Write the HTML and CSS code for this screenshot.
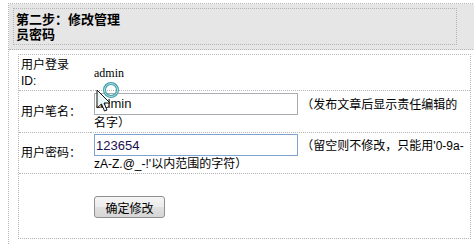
FILE: index.html
```html
<!DOCTYPE html>
<html>
<head>
<meta charset="utf-8">
<link rel="stylesheet" href="styles.css">
</head>
<body>
<div class="wrap">
  <div class="head">
    <div class="head-box">
      <div class="title">第二步：修改管理员密码</div>
    </div>
  </div>
  <table class="form">
    <tr class="r1">
      <td class="lbl">用户登录ID:</td>
      <td class="val"><span class="serif">admin</span></td>
    </tr>
    <tr class="r2">
      <td class="lbl">用户笔名：</td>
      <td class="val"><input class="inp" type="text" value="admin"> （发布文章后显示责任编辑的名字）</td>
    </tr>
    <tr class="r3">
      <td class="lbl">用户密码：</td>
      <td class="val"><input class="inp focus" type="text" value="123654"> （留空则不修改，只能用'0-9a-zA-Z.@_-!'以内范围的字符）</td>
    </tr>
    <tr class="r4">
      <td class="lbl last"></td>
      <td class="val last"><button class="btn" type="button">确定修改</button></td>
    </tr>
  </table>
</div>
<svg class="cursor" width="30" height="34" viewBox="0 0 30 34">
  <circle cx="16" cy="8" r="6.5" fill="none" stroke="#3f9ea8" stroke-width="3"/>
  <circle cx="16" cy="8" r="6.5" fill="none" stroke="#b6e2e6" stroke-width="1"/>
  <polygon points="2,8 2,26 6.5,22 9.5,29 12,28 9,21 15,21" fill="#eaf7f7" stroke="#111" stroke-width="1" stroke-linejoin="miter"/>
</svg>
</body>
</html>
```
FILE: styles.css
```css
html, body {
  overflow: hidden;
}
body {
  margin: 0;
  padding: 3px 0 0 8px;
  font-family: "Liberation Sans", "Noto Sans CJK SC", sans-serif;
  font-size: 12px;
  color: #000;
  background: #fff;
  position: relative;
}
.wrap {
  border-top: 1px dotted #b4b4b4;
  border-left: 1px dotted #b4b4b4;
  width: 466px;
  height: 240px;
}
.head {
  background: #e6e6e6;
  border-bottom: 1px dotted #b4b4b4;
  padding: 4px 0;
}
.head-box {
  box-sizing: border-box;
  margin-left: 4px;
  width: 444px;
  height: 37px;
  border: 1px dotted #b4b4b4;
  padding: 3px 2px 2px 2px;
}
.title {
  width: 110px;
  font-weight: bold;
  font-size: 13px;
  line-height: 15px;
}
.form {
  margin: 4px 0 0 9px;
  width: 453px;
  border: 1px dotted #b4b4b4;
  border-spacing: 0;
  table-layout: fixed;
}
.form td {
  border-bottom: 1px dotted #b4b4b4;
  vertical-align: middle;
  line-height: 16px;
  padding-top: 0;
  padding-bottom: 0;
}
.form td.last {
  border-bottom: none;
}
.lbl {
  width: 62px;
  padding-left: 2px;
  padding-right: 8px;
}
.val {
  padding-left: 3px;
  padding-right: 2px;
}
.r1 { height: 36px; }
.r2 { height: 42px; }
.r3 { height: 41px; }
.r4 { height: 64px; }
.r4 .val { padding-top: 2px; }
.serif {
  font-family: "Liberation Serif", serif;
  font-size: 12px;
}
.inp {
  box-sizing: border-box;
  width: 204px;
  height: 22px;
  margin: 0;
  padding: 0 1px;
  border: 1px solid #a9abb0;
  font-family: "Liberation Sans", sans-serif;
  font-size: 13px;
  color: #111;
  background: #fff;
  outline: none;
  vertical-align: baseline;
}
.inp.focus {
  border-color: #7ea3d0;
  color: #1a1050;
}
.btn {
  box-sizing: border-box;
  width: 71px;
  height: 22px;
  margin: 0;
  padding: 0;
  border: 1px solid #8f8f8f;
  border-radius: 3px;
  background: linear-gradient(#f5f5f5, #ececec 48%, #e0e0e0 52%, #d6d6d6);
  font-family: "Noto Sans CJK SC", sans-serif;
  font-size: 12px;
  color: #000;
}
.cursor {
  position: absolute;
  left: 95px;
  top: 82px;
}
```
